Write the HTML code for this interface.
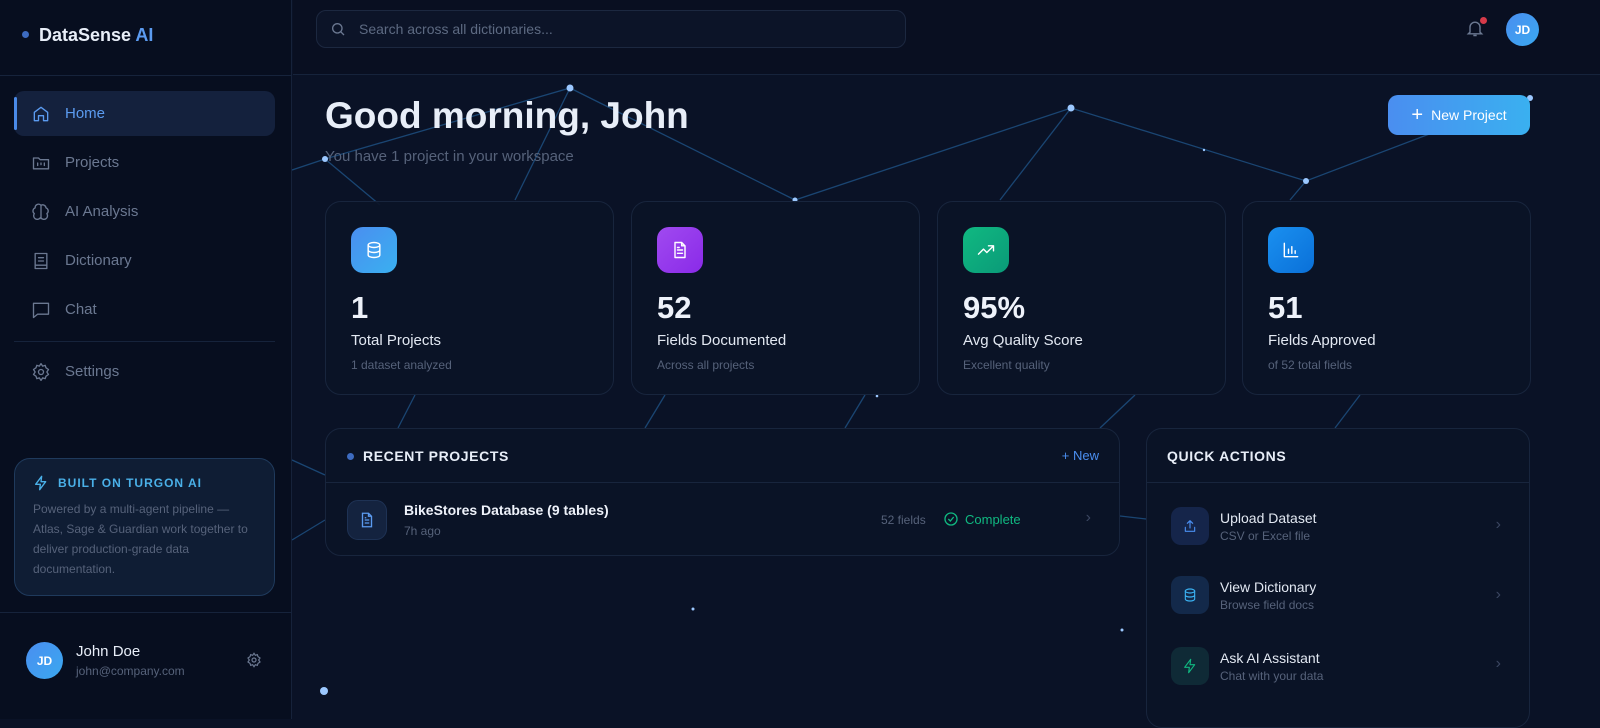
<!DOCTYPE html>
<html><head><meta charset="utf-8"><style>
*{box-sizing:border-box;margin:0;padding:0}
body{width:1600px;height:719px;overflow:hidden;background:#0a1226;font-family:"Liberation Sans",sans-serif;color:#e6ecf5;position:relative}
#bg{position:absolute;left:0;top:0}
.side{position:absolute;left:0;top:0;width:292px;height:719px;background:rgba(8,14,30,.92);border-right:1px solid #16223a}
.logo{position:absolute;left:22px;top:25px;font-size:18px;font-weight:bold;color:#e8eef8}
.logo span{color:#5b9bf0}
.logo:before{content:"";display:inline-block;width:7px;height:7px;border-radius:50%;background:#3d6bc0;margin-right:10px;vertical-align:middle;position:relative;top:-2px}
.hr{position:absolute;left:0;width:292px;height:1px;background:#16233b}
.nav{position:absolute;left:14px;width:261px;height:45px;border-radius:10px;display:flex;align-items:center;padding-left:17px;font-size:15px;color:#6b7891}
.nav svg{width:20px;height:20px;margin-right:14px;fill:none;stroke:#6b7891;stroke-width:1.6;stroke-linecap:round;stroke-linejoin:round}
.nav.act{background:#14213d;color:#5b9bf0}
.nav.act svg{stroke:#5b9bf0}
.nav.act:before{content:"";position:absolute;left:0;top:6px;width:3px;height:33px;background:#4a8ae8;border-radius:2px}
.built{position:absolute;left:14px;top:458px;width:261px;height:138px;border:1px solid #1f3a5c;border-radius:16px;background:#0f1d34;padding:16px 18px}
.built h4{font-size:12px;letter-spacing:1px;color:#4ab0e8;display:flex;align-items:center}
.built p{font-size:12px;line-height:20px;color:#56627a;margin-top:8px}
.av{border-radius:50%;background:linear-gradient(135deg,#4a8ef0,#3aa8f0);color:#fff;font-weight:bold;font-size:12px;display:flex;align-items:center;justify-content:center;position:absolute}
.top{position:absolute;left:293px;top:0;right:0;height:75px;border-bottom:1px solid #16233b;background:rgba(8,14,30,.6)}
.search{position:absolute;left:316px;top:10px;width:590px;height:38px;border:1px solid #1c2840;border-radius:10px;background:#0c1428;font-size:14px;color:#5d6a82;padding-left:42px;line-height:36px}
h1{position:absolute;left:325px;top:95px;font-size:37px;font-weight:bold;color:#e8eef8}
.sub{position:absolute;left:325px;top:148px;font-size:15px;color:#56627a}
.btn{position:absolute;left:1388px;top:95px;width:142px;height:40px;border-radius:10px;background:linear-gradient(90deg,#4a8ef0,#3ab0f0);color:#fff;font-size:14px;display:flex;align-items:center;justify-content:center}
.card{position:absolute;border:1px solid #18253d;border-radius:16px;background:rgba(11,19,38,.92)}
.stat{top:201px;width:289px;height:194px;padding:25px}
.ic{width:46px;height:46px;border-radius:12px;display:flex;align-items:center;justify-content:center}
.ic svg{width:20px;height:20px;fill:none;stroke:#fff;stroke-width:1.7;stroke-linecap:round;stroke-linejoin:round}
.num{font-size:31px;font-weight:bold;margin-top:17px;color:#eef2fa}
.lab{font-size:15px;margin-top:6px;color:#e2e8f2}
.sm{font-size:12px;margin-top:9px;color:#56627a}
.ttl{font-size:14px;font-weight:bold;letter-spacing:.6px;color:#e8eef8}
.qa{position:absolute;left:24px;display:flex;align-items:center}
.qi{width:38px;height:38px;border-radius:10px;display:flex;align-items:center;justify-content:center;margin-right:11px}
.qi svg{width:16px;height:16px;fill:none;stroke-width:1.7;stroke-linecap:round;stroke-linejoin:round}
.qt{font-size:14px;color:#e2e8f2}.qs{font-size:12px;color:#56627a;margin-top:3px}
.chev{position:absolute;right:28px;color:#3a4560;font-size:16px}
</style></head><body>
<svg id="bg" width="1600" height="719">
<g stroke="#1d4f80" stroke-width="1.3" fill="none" opacity=".85">
<polyline points="292,170 325,159 570,88 795,200 1071,108 1306,181 1440,130 1530,98"/>
<line x1="325" y1="159" x2="380" y2="205"/><line x1="570" y1="88" x2="515" y2="200"/>
<line x1="1071" y1="108" x2="1000" y2="200"/><line x1="1306" y1="181" x2="1290" y2="200"/>
<line x1="415" y1="395" x2="398" y2="428"/><line x1="665" y1="395" x2="645" y2="428"/><line x1="865" y1="395" x2="845" y2="428"/>
<line x1="1135" y1="395" x2="1100" y2="428"/><line x1="1360" y1="395" x2="1335" y2="428"/>
<line x1="292" y1="460" x2="325" y2="475"/><line x1="1120" y1="516" x2="1146" y2="519"/><line x1="292" y1="540" x2="325" y2="520"/>
</g>
<g fill="#9cc8ff"><circle cx="325" cy="159" r="3"/><circle cx="570" cy="88" r="3.5"/><circle cx="795" cy="200" r="2.5"/><circle cx="1071" cy="108" r="3.5"/><circle cx="1306" cy="181" r="3"/><circle cx="1530" cy="98" r="3"/><circle cx="324" cy="691" r="4"/><circle cx="693" cy="609" r="1.5"/><circle cx="1122" cy="630" r="1.5"/><circle cx="1204" cy="150" r="1.2"/><circle cx="877" cy="396" r="1.3"/></g>
</svg>
<div class="side">
<div class="logo">DataSense <span>AI</span></div>
<div class="hr" style="top:75px"></div>
<div class="nav act" style="top:91px"><svg viewBox="0 0 24 24"><path d="M4 10l8-6 8 6v10h-5v-6h-6v6H4z"/></svg>Home</div>
<div class="nav" style="top:140px"><svg viewBox="0 0 24 24"><path d="M3 6h6l2 2h10v11H3z"/><path d="M8 12v3M12 12v2M16 12v3"/></svg>Projects</div>
<div class="nav" style="top:189px"><svg viewBox="0 0 24 24"><path d="M12 4a4 4 0 00-7 3 4 4 0 00-1 7 4 4 0 007 5h1a4 4 0 007-5 4 4 0 00-1-7 4 4 0 00-6-3zM12 4v16"/></svg>AI Analysis</div>
<div class="nav" style="top:238px"><svg viewBox="0 0 24 24"><path d="M5 3h14v18H5zM9 8h6M9 12h6M5 17h14"/></svg>Dictionary</div>
<div class="nav" style="top:287px"><svg viewBox="0 0 24 24"><path d="M3 4h18v13H8l-5 4z"/></svg>Chat</div>
<div class="hr" style="top:341px;left:14px;width:261px"></div>
<div class="nav" style="top:349px"><svg viewBox="0 0 24 24"><circle cx="12" cy="12" r="3"/><path d="M12 2l2 3 3-1 1 3 3 2-2 3 2 3-3 2-1 3-3-1-2 3-2-3-3 1-1-3-3-2 2-3-2-3 3-2 1-3 3 1z"/></svg>Settings</div>
<div class="built"><h4><svg width="16" height="16" viewBox="0 0 24 24" fill="none" stroke="#4ab0e8" stroke-width="2" stroke-linejoin="round" style="margin-right:9px"><path d="M13 2L4 14h7l-1 8 9-12h-7z"/></svg>BUILT ON TURGON AI</h4><p>Powered by a multi-agent pipeline — Atlas, Sage &amp; Guardian work together to deliver production-grade data documentation.</p></div>
<div class="hr" style="top:612px"></div>
<div class="av" style="left:26px;top:642px;width:37px;height:37px">JD</div>
<div style="position:absolute;left:76px;top:643px;font-size:15px;color:#e8eef8">John Doe</div>
<div style="position:absolute;left:76px;top:664px;font-size:12px;color:#56627a">john@company.com</div>
<svg style="position:absolute;left:246px;top:652px" width="16" height="16" viewBox="0 0 24 24" fill="none" stroke="#6b7891" stroke-width="1.8"><circle cx="12" cy="12" r="3"/><path d="M12 2l2 3 3-1 1 3 3 2-2 3 2 3-3 2-1 3-3-1-2 3-2-3-3 1-1-3-3-2 2-3-2-3 3-2 1-3 3 1z"/></svg>
</div>
<div class="top"></div>
<div class="search">Search across all dictionaries...</div>
<svg style="position:absolute;left:330px;top:21px" width="16" height="16" viewBox="0 0 24 24" fill="none" stroke="#6b7891" stroke-width="2"><circle cx="11" cy="11" r="7"/><path d="M16 16l5 5"/></svg>
<svg style="position:absolute;left:1465px;top:18px" width="20" height="20" viewBox="0 0 24 24" fill="none" stroke="#6b7891" stroke-width="1.7"><path d="M6 17V11a6 6 0 0112 0v6l2 2H4zM10 21h4"/></svg>
<div style="position:absolute;left:1480px;top:17px;width:7px;height:7px;border-radius:50%;background:#d63a4a"></div>
<div class="av" style="left:1506px;top:13px;width:33px;height:33px">JD</div>
<h1>Good morning, John</h1>
<div class="sub">You have 1 project in your workspace</div>
<div class="btn"><span style="font-size:20px;margin-right:8px;font-weight:300">+</span>New Project</div>

<div class="card stat" style="left:325px"><div class="ic" style="background:linear-gradient(135deg,#4a8ef0,#3ab0f0)"><svg viewBox="0 0 24 24"><ellipse cx="12" cy="6" rx="7" ry="3"/><path d="M5 6v12c0 1.7 3 3 7 3s7-1.3 7-3V6M5 12c0 1.7 3 3 7 3s7-1.3 7-3"/></svg></div><div class="num">1</div><div class="lab">Total Projects</div><div class="sm">1 dataset analyzed</div></div>
<div class="card stat" style="left:631px"><div class="ic" style="background:linear-gradient(135deg,#a04af0,#8a2ae8)"><svg viewBox="0 0 24 24"><path d="M6 3h8l4 4v14H6zM14 3v4h4M9 12h6M9 16h6M9 9h2"/></svg></div><div class="num">52</div><div class="lab">Fields Documented</div><div class="sm">Across all projects</div></div>
<div class="card stat" style="left:937px"><div class="ic" style="background:linear-gradient(135deg,#10b981,#0a9a78)"><svg viewBox="0 0 24 24"><path d="M3 17l6-6 4 4 8-8M15 7h6v6"/></svg></div><div class="num">95%</div><div class="lab">Avg Quality Score</div><div class="sm">Excellent quality</div></div>
<div class="card stat" style="left:1242px"><div class="ic" style="background:linear-gradient(135deg,#1a90f0,#0a70d8)"><svg viewBox="0 0 24 24"><path d="M4 4v16h16M9 16v-5M13 16V8M17 16v-3"/></svg></div><div class="num">51</div><div class="lab">Fields Approved</div><div class="sm">of 52 total fields</div></div>

<div class="card" style="left:325px;top:428px;width:795px;height:128px">
<div style="position:absolute;left:21px;top:19px;display:flex;align-items:center" class="ttl"><span style="width:7px;height:7px;border-radius:50%;background:#3d6bc0;margin-right:9px"></span>RECENT PROJECTS</div>
<div style="position:absolute;right:20px;top:19px;font-size:13px;color:#4a8ef0">+ New</div>
<div style="position:absolute;left:0;right:0;top:53px;height:1px;background:#18253d"></div>
<div style="position:absolute;left:21px;top:71px;width:40px;height:40px;border-radius:11px;background:#14233f;border:1px solid #1e3254;display:flex;align-items:center;justify-content:center"><svg width="18" height="18" viewBox="0 0 24 24" fill="none" stroke="#5b9bf0" stroke-width="1.8"><path d="M6 3h8l4 4v14H6zM14 3v4h4M9 12h6M9 16h6M9 9h2"/></svg></div>
<div style="position:absolute;left:78px;top:73px;font-size:14px;font-weight:bold;color:#eef2fa">BikeStores Database (9 tables)</div>
<div style="position:absolute;left:78px;top:95px;font-size:12px;color:#56627a">7h ago</div>
<div style="position:absolute;left:555px;top:84px;font-size:12px;color:#56627a">52 fields</div>
<div style="position:absolute;left:617px;top:82px;font-size:13px;color:#10b981;display:flex;align-items:center"><svg width="16" height="16" viewBox="0 0 24 24" fill="none" stroke="#10b981" stroke-width="2" style="margin-right:6px"><circle cx="12" cy="12" r="9"/><path d="M8 12l3 3 5-6"/></svg>Complete</div>
<div class="chev" style="top:80px">›</div>
</div>

<div class="card" style="left:1146px;top:428px;width:384px;height:300px">
<div class="ttl" style="position:absolute;left:20px;top:19px">QUICK ACTIONS</div>
<div style="position:absolute;left:0;right:0;top:53px;height:1px;background:#18253d"></div>
<div class="qa" style="top:78px"><div class="qi" style="background:#15254a"><svg viewBox="0 0 24 24" stroke="#4a8ef0"><path d="M12 15V4M8 8l4-4 4 4M5 14v6h14v-6"/></svg></div><div><div class="qt">Upload Dataset</div><div class="qs">CSV or Excel file</div></div></div>
<div class="chev" style="top:87px">›</div>
<div class="qa" style="top:147px"><div class="qi" style="background:#13294a"><svg viewBox="0 0 24 24" stroke="#3ab0f0"><ellipse cx="12" cy="6" rx="7" ry="3"/><path d="M5 6v12c0 1.7 3 3 7 3s7-1.3 7-3V6M5 12c0 1.7 3 3 7 3s7-1.3 7-3"/></svg></div><div><div class="qt">View Dictionary</div><div class="qs">Browse field docs</div></div></div>
<div class="chev" style="top:157px">›</div>
<div class="qa" style="top:218px"><div class="qi" style="background:#0f2a36"><svg viewBox="0 0 24 24" stroke="#10b981"><path d="M13 2L4 14h7l-1 8 9-12h-7z"/></svg></div><div><div class="qt">Ask AI Assistant</div><div class="qs">Chat with your data</div></div></div>
<div class="chev" style="top:226px">›</div>
</div>
</body></html>
